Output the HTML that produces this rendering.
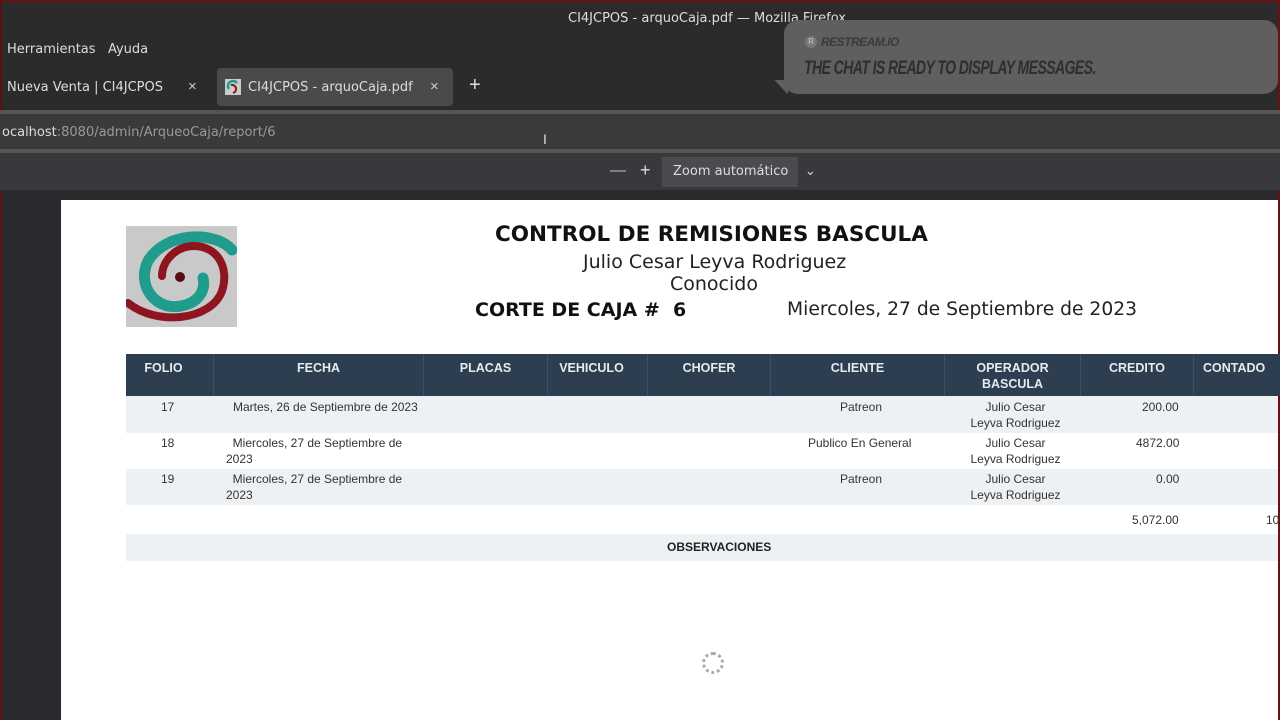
<!DOCTYPE html>
<html><head><meta charset="utf-8"><style>
*{margin:0;padding:0;box-sizing:border-box}
body{width:1280px;height:720px;overflow:hidden;background:#2a2a2e;position:relative;font-family:"Liberation Sans",sans-serif}
.a{position:absolute;white-space:nowrap}
.ub{font-family:"DejaVu Sans","Liberation Sans",sans-serif}
.th{position:absolute;top:354px;height:42px;background:#2c3e50;color:#e6ebef;font-size:12.5px;font-weight:bold;text-align:center;padding-top:6px;line-height:16px;border-right:1px solid #3d5064}
.td{position:absolute;font-size:12px;color:#333;line-height:16px}
</style></head><body>
<div class="a" style="left:0;top:0;width:1280px;height:112px;background:#2b2b2b"></div>
<div class="a" style="left:0;top:0;width:1280px;height:2px;background:#6b1016"></div>
<div class="a" style="left:0;top:0;width:2px;height:720px;background:#5a1216"></div>
<div class="a" style="left:1278px;top:0;width:2px;height:720px;background:#6b1016"></div>
<div class="a ub" style="left:568px;top:11px;font-size:13px;color:#ddd">CI4JCPOS - arquoCaja.pdf — Mozilla Firefox</div>
<div class="a ub" style="left:7px;top:42px;font-size:13px;color:#ddd">Herramientas&nbsp;&nbsp; Ayuda</div>
<div class="a ub" style="left:7px;top:80px;font-size:13px;color:#ddd">Nueva Venta | CI4JCPOS</div>
<div class="a" style="left:188px;top:78px;font-size:15px;color:#ccc">×</div>
<div class="a" style="left:217px;top:68px;width:236px;height:38px;background:#4a4a4a;border-radius:4px"></div>
<svg class="a" style="left:225px;top:79px" width="16" height="16" viewBox="0 0 16 16"><rect width="16" height="16" fill="#ccc"/><path d="M4 10a5 5 0 0 1 8-6" stroke="#1f9c8c" stroke-width="2.5" fill="none"/><path d="M6 6a4 4 0 1 1 2 8" stroke="#8e1520" stroke-width="2" fill="none"/></svg>
<div class="a ub" style="left:248px;top:80px;font-size:13px;color:#ddd">CI4JCPOS - arquoCaja.pdf</div>
<div class="a" style="left:430px;top:78px;font-size:15px;color:#ccc">×</div>
<div class="a" style="left:469px;top:74px;font-size:20px;color:#ddd">+</div>
<div class="a" style="left:0;top:110px;width:1280px;height:4px;background:#555"></div>
<div class="a" style="left:0;top:114px;width:1280px;height:36px;background:#3a3a3a"></div>
<div class="a" style="left:0;top:149px;width:1280px;height:4px;background:#555"></div>
<div class="a ub" style="left:2px;top:125px;font-size:13px;color:#999"><span style="color:#ddd">ocalhost</span>:8080/admin/ArqueoCaja/report/6</div>
<div class="a" style="left:543px;top:131px;font-size:14px;color:#ddd">I</div>
<div class="a" style="left:0;top:153px;width:1280px;height:37px;background:#38383d"></div>
<div class="a" style="left:610px;top:162px;font-size:16px;color:#bbb">—</div>
<div class="a" style="left:640px;top:160px;font-size:18px;color:#ddd">+</div>
<div class="a ub" style="left:662px;top:157px;width:136px;height:30px;background:#4a4a4f"></div>
<div class="a ub" style="left:673px;top:164px;font-size:13px;color:#ddd">Zoom automático&nbsp;&nbsp;&nbsp; ⌄</div>
<div class="a" style="left:784px;top:20px;width:494px;height:74px;background:#5f5f5f;border-radius:14px"></div>
<div class="a" style="left:772px;top:80px;width:0;height:0;border-left:18px solid transparent;border-top:14px solid #5f5f5f;transform:skewX(-20deg)"></div>
<div class="a" style="left:805px;top:36px;width:12px;height:12px;border-radius:6px;background:#777;color:#ccc;font-size:8px;text-align:center;line-height:12px">R</div>
<div class="a" style="left:821px;top:35px;font-size:12px;color:#3a3a3a;font-weight:bold;font-style:italic;letter-spacing:-0.5px">RESTREAM.IO</div>
<div class="a" style="left:804px;top:58px;font-size:19px;color:#2e2e2e;font-weight:bold;font-style:italic;letter-spacing:-0.8px;transform:scaleX(0.74);transform-origin:left">THE CHAT IS READY TO DISPLAY MESSAGES.</div>
<div class="a" style="left:61px;top:200px;width:1217px;height:520px;background:#fff"></div>
<div class="a" style="left:126px;top:226px;width:111px;height:101px;background:#c9c9c9"></div>
<svg class="a" style="left:126px;top:226px" width="111" height="101" viewBox="0 0 111 101">
<path d="M106 24 C90 5 40 5 22 35 C10 60 30 85 55 80 C72 77 80 65 77 52" stroke="#1f9c8c" stroke-width="11" fill="none" stroke-linecap="round"/>
<path d="M2 77 C30 100 85 95 96 65 C104 40 90 20 68 20 C50 20 36 35 36 50" stroke="#8e1520" stroke-width="8" fill="none" stroke-linecap="round"/>
<circle cx="54" cy="51" r="5" fill="#5a0a14"/></svg>
<div class="a ub" style="left:495px;top:222px;font-size:21.5px;font-weight:bold;color:#111">CONTROL DE REMISIONES BASCULA</div>
<div class="a ub" style="left:583px;top:251px;font-size:19px;color:#222">Julio Cesar Leyva Rodriguez</div>
<div class="a ub" style="left:670px;top:273px;font-size:19px;color:#222">Conocido</div>
<div class="a ub" style="left:475px;top:299px;font-size:19px;font-weight:bold;color:#111">CORTE DE CAJA #&nbsp; 6</div>
<div class="a ub" style="left:787px;top:299px;font-size:18.7px;color:#222">Miercoles, 27 de Septiembre de 2023</div>
<div class="th" style="left:126px;width:88px;padding-right:12px">FOLIO</div>
<div class="th" style="left:214px;width:210px">FECHA</div>
<div class="th" style="left:424px;width:124px">PLACAS</div>
<div class="th" style="left:548px;width:100px;padding-right:12px">VEHICULO</div>
<div class="th" style="left:648px;width:123px">CHOFER</div>
<div class="th" style="left:771px;width:174px">CLIENTE</div>
<div class="th" style="left:945px;width:136px">OPERADOR<br>BASCULA</div>
<div class="th" style="left:1081px;width:113px">CREDITO</div>
<div class="th" style="left:1194px;width:110px;text-align:left;padding-left:9px">CONTADO</div>
<div class="a" style="left:126px;top:396px;width:1152px;height:37px;background:#eef1f3"></div>
<div class="a" style="left:126px;top:469px;width:1152px;height:36px;background:#eef1f3"></div>
<div class="a" style="left:126px;top:534px;width:1152px;height:27px;background:#eef1f3"></div>
<div class="td" style="left:161px;top:399px">17</div>
<div class="td" style="left:233px;top:399px">Martes, 26 de Septiembre de 2023</div>
<div class="td" style="left:840px;top:399px">Patreon</div>
<div class="td" style="left:969px;top:399px;text-align:center;width:93px">Julio Cesar<br>Leyva Rodriguez</div>
<div class="td" style="left:1142px;top:399px">200.00</div>
<div class="td" style="left:161px;top:435px">18</div>
<div class="td" style="left:226px;top:435px">&nbsp;&nbsp;Miercoles, 27 de Septiembre de<br>2023</div>
<div class="td" style="left:808px;top:435px">Publico En General</div>
<div class="td" style="left:969px;top:435px;text-align:center;width:93px">Julio Cesar<br>Leyva Rodriguez</div>
<div class="td" style="left:1136px;top:435px">4872.00</div>
<div class="td" style="left:161px;top:471px">19</div>
<div class="td" style="left:226px;top:471px">&nbsp;&nbsp;Miercoles, 27 de Septiembre de<br>2023</div>
<div class="td" style="left:840px;top:471px">Patreon</div>
<div class="td" style="left:969px;top:471px;text-align:center;width:93px">Julio Cesar<br>Leyva Rodriguez</div>
<div class="td" style="left:1156px;top:471px">0.00</div>
<div class="td" style="left:1132px;top:512px">5,072.00</div>
<div class="td" style="left:1266px;top:512px">10</div>
<div class="td" style="left:667px;top:539px;font-weight:bold;color:#222">OBSERVACIONES</div>
<div class="a" style="left:702px;top:652px;width:22px;height:22px;border-radius:11px;border:3px dotted #aaa"></div>
</body></html>
